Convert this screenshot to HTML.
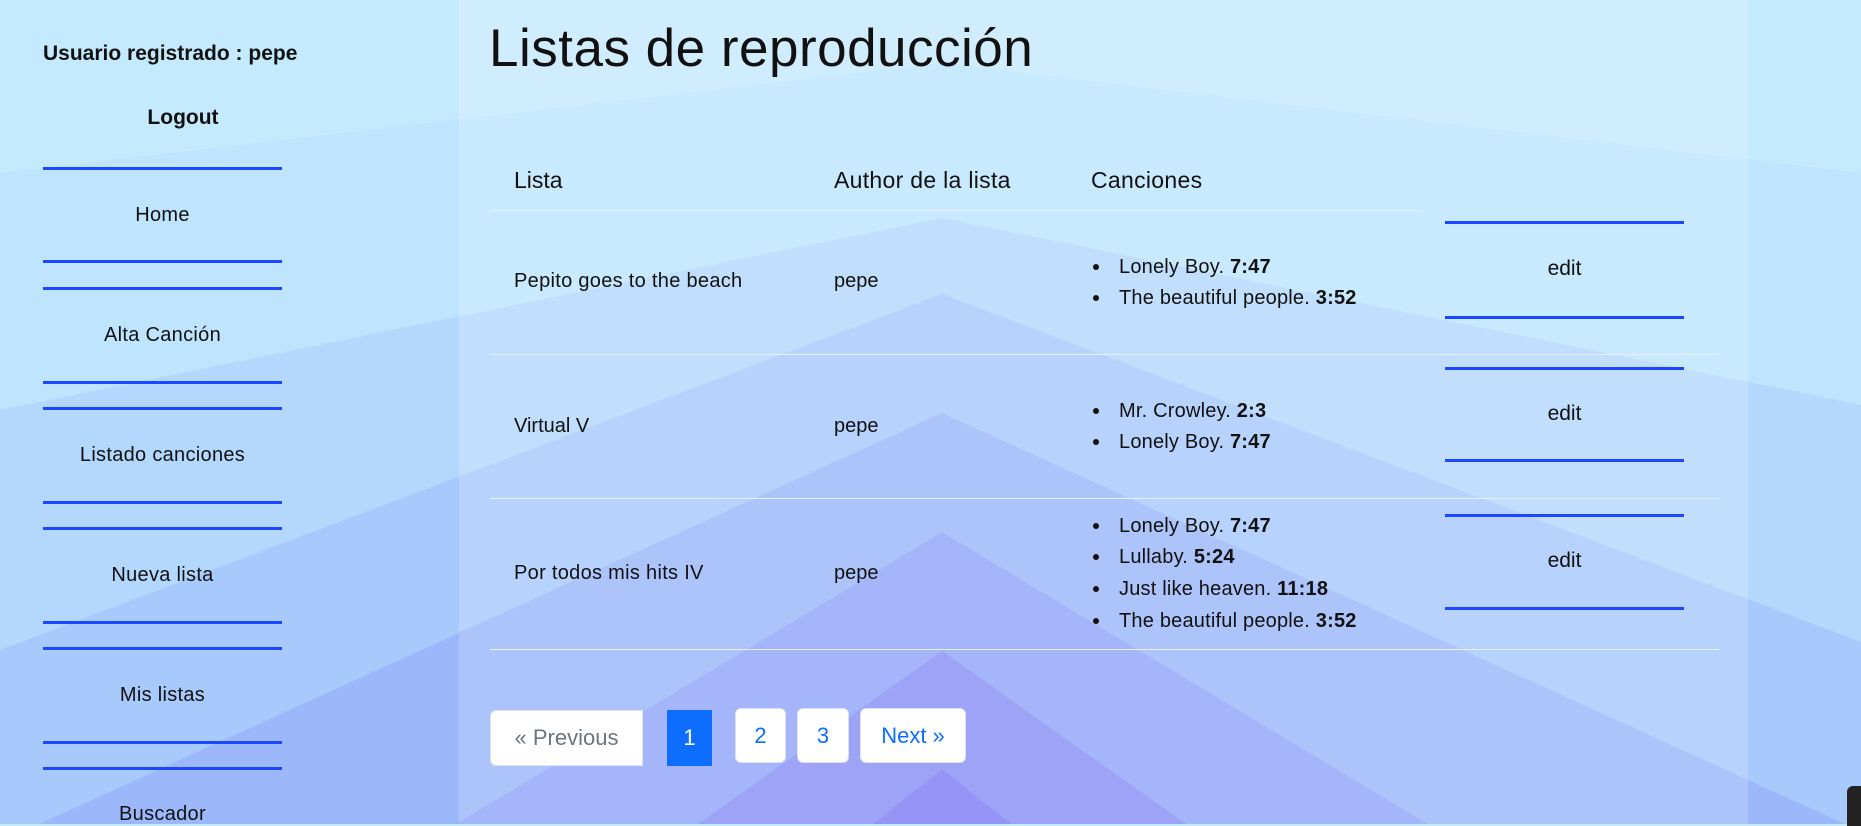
<!DOCTYPE html>
<html><head><meta charset="utf-8"><style>
*{margin:0;padding:0;box-sizing:border-box}
body{width:1861px;height:824px;overflow:hidden;position:relative;font-family:"Liberation Sans",sans-serif;color:#111;background:#c5eafe}
svg.bg{position:absolute;left:0;top:0}
.a{position:absolute;white-space:nowrap}
.ln{position:absolute;height:3px;background:#1a47ff}
.nav{position:absolute;left:43px;width:239px;text-align:center;font-size:20px;letter-spacing:0.3px}
.sep{position:absolute;left:490px;height:1px;background:#e8f1fb}
.song{position:absolute;left:1093px;font-size:20px;letter-spacing:0.2px}
.song:before{content:"";position:absolute;left:0;top:8px;width:6px;height:6px;border-radius:50%;background:#111}
.song span{margin-left:26px}
.pg{position:absolute;background:#fff;border:1px solid #dee2e6;border-radius:6px;font-size:22px;color:#0d6efd;text-align:center}
</style></head><body>
<svg class="bg" width="1861" height="824" viewBox="0 0 1861 824">
<rect width="1861" height="824" fill="#c5eafe"/>
<polygon points="942,63 1861,173 1861,824 0,824 0,173" fill="#bee4fe"/>
<polygon points="942,218 1861,405 1861,824 0,824 0,410" fill="#b4d8fd"/>
<polygon points="942,294 1861,642 1861,824 0,824 0,650" fill="#a8c9fc"/>
<polygon points="942,413 1845,824 39,824" fill="#9cb8fa"/>
<polygon points="942,532 1428,824 456,824" fill="#92a5f8"/>
<polygon points="942,651 1186,824 698,824" fill="#8890f6"/>
<polygon points="942,769 1011,824 873,824" fill="#7f7ef3"/>
<rect x="459" y="0" width="1289" height="824" fill="#ffffff" fill-opacity="0.18"/>
</svg>

<div class="a" style="left:43px;top:42px;font-size:21px;font-weight:bold">Usuario registrado : pepe</div>
<div class="a" style="left:43px;width:280px;text-align:center;top:106px;font-size:21px;font-weight:bold">Logout</div>

<div class="ln" style="left:43px;width:239px;top:167px"></div>
<div class="nav" style="top:204px">Home</div>
<div class="ln" style="left:43px;width:239px;top:260px"></div>
<div class="ln" style="left:43px;width:239px;top:287px"></div>
<div class="nav" style="top:324px">Alta Canción</div>
<div class="ln" style="left:43px;width:239px;top:381px"></div>
<div class="ln" style="left:43px;width:239px;top:407px"></div>
<div class="nav" style="top:444px">Listado canciones</div>
<div class="ln" style="left:43px;width:239px;top:501px"></div>
<div class="ln" style="left:43px;width:239px;top:527px"></div>
<div class="nav" style="top:564px">Nueva lista</div>
<div class="ln" style="left:43px;width:239px;top:621px"></div>
<div class="ln" style="left:43px;width:239px;top:647px"></div>
<div class="nav" style="top:684px">Mis listas</div>
<div class="ln" style="left:43px;width:239px;top:741px"></div>
<div class="ln" style="left:43px;width:239px;top:767px"></div>
<div class="nav" style="top:803px">Buscador</div>

<div class="a" style="left:489px;top:18px;font-size:53px;letter-spacing:0.5px">Listas de reproducción</div>

<div class="a" style="left:514px;top:167px;font-size:23px">Lista</div>
<div class="a" style="left:834px;top:167px;font-size:23px;letter-spacing:0.3px">Author de la lista</div>
<div class="a" style="left:1091px;top:167px;font-size:23px;letter-spacing:0.3px">Canciones</div>
<div class="sep" style="top:210px;width:930px"></div>

<div class="a" style="left:514px;top:270px;font-size:20px;letter-spacing:0.3px">Pepito goes to the beach</div>
<div class="a" style="left:834px;top:270px;font-size:20px">pepe</div>
<div class="song" style="top:256px"><span>Lonely Boy. <b>7:47</b></span></div>
<div class="song" style="top:287px"><span>The beautiful people. <b>3:52</b></span></div>
<div class="ln" style="left:1445px;width:239px;top:221px"></div>
<div class="a" style="left:1445px;width:239px;text-align:center;top:257px;font-size:21px">edit</div>
<div class="ln" style="left:1445px;width:239px;top:316px"></div>
<div class="sep" style="top:354px;width:1229px"></div>

<div class="a" style="left:514px;top:415px;font-size:20px">Virtual V</div>
<div class="a" style="left:834px;top:415px;font-size:20px">pepe</div>
<div class="song" style="top:400px"><span>Mr. Crowley. <b>2:3</b></span></div>
<div class="song" style="top:431px"><span>Lonely Boy. <b>7:47</b></span></div>
<div class="ln" style="left:1445px;width:239px;top:367px"></div>
<div class="a" style="left:1445px;width:239px;text-align:center;top:402px;font-size:21px">edit</div>
<div class="ln" style="left:1445px;width:239px;top:459px"></div>
<div class="sep" style="top:498px;width:1229px"></div>

<div class="a" style="left:514px;top:562px;font-size:20px;letter-spacing:0.3px">Por todos mis hits IV</div>
<div class="a" style="left:834px;top:562px;font-size:20px">pepe</div>
<div class="song" style="top:515px"><span>Lonely Boy. <b>7:47</b></span></div>
<div class="song" style="top:546px"><span>Lullaby. <b>5:24</b></span></div>
<div class="song" style="top:578px"><span>Just like heaven. <b>11:18</b></span></div>
<div class="song" style="top:610px"><span>The beautiful people. <b>3:52</b></span></div>
<div class="ln" style="left:1445px;width:239px;top:514px"></div>
<div class="a" style="left:1445px;width:239px;text-align:center;top:549px;font-size:21px">edit</div>
<div class="ln" style="left:1445px;width:239px;top:607px"></div>
<div class="sep" style="top:649px;width:1229px"></div>

<div class="pg" style="left:490px;top:710px;width:153px;height:56px;line-height:54px;color:#6c757d;border-radius:6px 0 0 6px">« Previous</div>
<div class="a" style="left:667px;top:710px;width:45px;height:56px;line-height:56px;background:#0d6efd;color:#fff;text-align:center;font-size:22px">1</div>
<div class="pg" style="left:735px;top:708px;width:51px;height:55px;line-height:53px">2</div>
<div class="pg" style="left:797px;top:708px;width:52px;height:55px;line-height:53px">3</div>
<div class="pg" style="left:860px;top:708px;width:106px;height:55px;line-height:53px">Next »</div>

<div class="a" style="left:1847px;top:786px;width:20px;height:40px;background:#222;border-radius:6px 0 0 0"></div>
</body></html>
